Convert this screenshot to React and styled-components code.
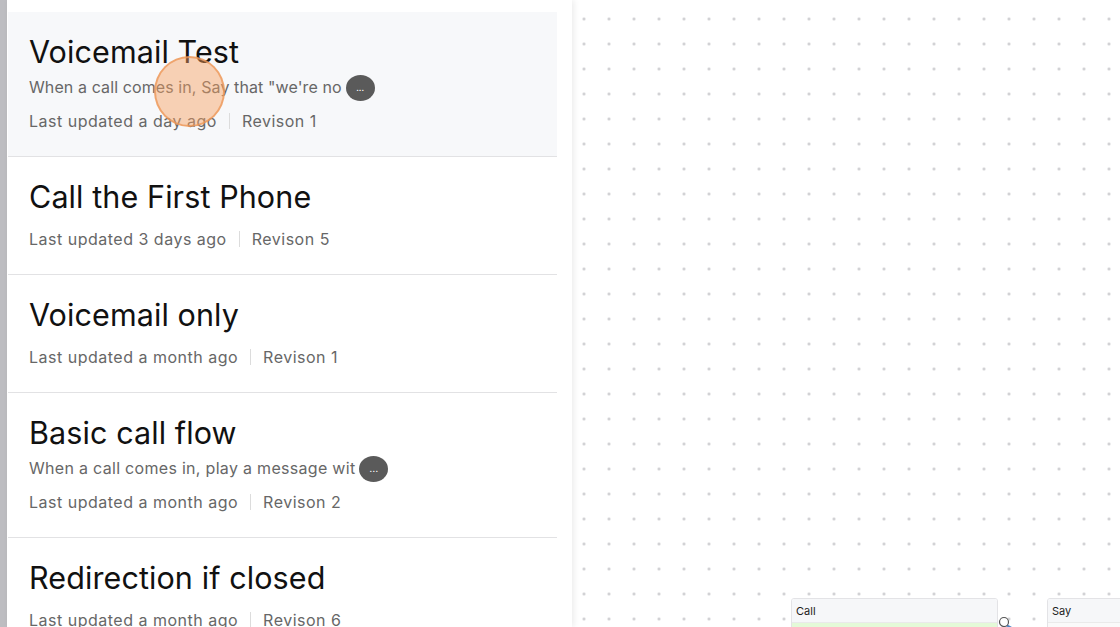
import React from "react";
import styled, { createGlobalStyle } from "styled-components";

const Global = createGlobalStyle`
  html, body { margin: 0; padding: 0; background: #fff; }
  body { font-family: "Inter", "Open Sans", sans-serif; overflow: hidden; }
  * { box-sizing: border-box; }
`;

const Page = styled.div`
  display: flex;
  width: 1120px;
  height: 627px;
  overflow: hidden;
`;

const Strip = styled.div`
  width: 7px;
  flex: none;
  background: #bdbdc1;
`;

const Sidebar = styled.aside`
  width: 565px;
  flex: none;
  background: #fff;
  padding: 12px 15px 0 1px;
  box-shadow: 2px 0 6px rgba(0, 0, 0, 0.08);
  position: relative;
  z-index: 2;
  display: flex;
  flex-direction: column;
`;

const Card = styled.div`
  position: relative;
  padding: 20px 21px 23px;
  border-bottom: 1px solid #e2e2e4;
  background: ${(p) => (p.$active ? "#f7f8fa" : "#fff")};
  flex: none;
`;

const Title = styled.h2`
  margin: 0;
  font-weight: 400;
  font-size: 30.5px;
  line-height: 40px;
  color: #111;
  letter-spacing: 0.1px;
`;

const Desc = styled.div`
  display: flex;
  align-items: center;
  gap: 4px;
  margin-top: 2px;
  height: 25px;
  font-size: 16px;
  color: #676767;
  letter-spacing: ${(p) => p.$ls}px;
`;

const More = styled.span`
  display: inline-flex;
  align-items: center;
  justify-content: center;
  width: 29px;
  height: 26px;
  border-radius: 50%;
  background: #5a5a5a;
  color: #fff;
  font-size: 9px;
  line-height: 1;
  padding-bottom: 2px;
  margin-top: 3px;
`;

const Meta = styled.div`
  display: flex;
  align-items: center;
  margin-top: 10px;
  height: 24px;
  font-size: 16px;
  color: #676767;
  letter-spacing: 0.5px;
`;

const Sep = styled.span`
  width: 1px;
  height: 16px;
  background: #dcdcdc;
  margin: 0 12px;
`;

const Cursor = styled.div`
  position: absolute;
  left: 147px;
  top: 56px;
  width: 71px;
  height: 71px;
  border-radius: 50%;
  background: rgba(246, 160, 95, 0.45);
  border: 2px solid rgba(236, 150, 85, 0.75);
  pointer-events: none;
`;

const Canvas = styled.main`
  flex: 1;
  position: relative;
  background-color: #fff;
  background-image: radial-gradient(circle, #c9c9cc 1px, transparent 1.6px);
  background-size: 25px 25px;
  background-position: -0.5px 6.5px;
`;

const Node = styled.div`
  position: absolute;
  width: ${(p) => p.$w}px;
  border: 1px solid #e3e3e6;
  border-radius: 3px 3px 0 0;
  background: #fff;
  overflow: hidden;
`;

const NodeHeader = styled.div`
  height: 23px;
  display: flex;
  align-items: center;
  padding: 0 4px;
  background: #f6f7f9;
  font-family: "Inter", sans-serif;
  font-size: 11px;
  color: #222;
`;

const NodeBody = styled.div`
  height: 20px;
  background: ${(p) => p.$bg};
  border-top: 1px solid #eaeaea;
`;

const Edge = styled.svg`
  position: absolute;
  left: 426px;
  top: 612px;
  overflow: visible;
`;

const flows = [
  { title: "Voicemail Test", desc: "When a call comes in, Say that \"we're no", ls: 0.1, when: "a day ago", rev: 1, active: true },
  { title: "Call the First Phone", when: "3 days ago", rev: 5 },
  { title: "Voicemail only", when: "a month ago", rev: 1 },
  { title: "Basic call flow", desc: "When a call comes in, play a message wit", ls: 0.3, when: "a month ago", rev: 2 },
  { title: "Redirection if closed", when: "a month ago", rev: 6 },
];

export default function App() {
  return (
    <>
      <Global />
      <Page>
        <Strip />
        <Sidebar>
          {flows.map((f, i) => (
            <Card key={i} $active={f.active}>
              <Title>{f.title}</Title>
              {f.desc && (
                <Desc $ls={f.ls}>
                  {f.desc}
                  <More>...</More>
                </Desc>
              )}
              <Meta>
                Last updated {f.when}
                <Sep />
                Revison {f.rev}
              </Meta>
            </Card>
          ))}
          <Cursor />
        </Sidebar>
        <Canvas>
          <Node $w={207} style={{ left: 219, top: 598 }}>
            <NodeHeader>Call</NodeHeader>
            <NodeBody $bg="#e4fad8" />
          </Node>
          <Node $w={90} style={{ left: 475, top: 598 }}>
            <NodeHeader>Say</NodeHeader>
            <NodeBody $bg="#fafafa" />
          </Node>
          <Edge width="40" height="20">
            <path d="M6 12 C 14 16, 22 20, 30 26" stroke="#4f86c6" strokeWidth="2" fill="none" />
            <circle cx="6" cy="10" r="4.5" fill="#fff" stroke="#555" strokeWidth="1.2" />
          </Edge>
        </Canvas>
      </Page>
    </>
  );
}
